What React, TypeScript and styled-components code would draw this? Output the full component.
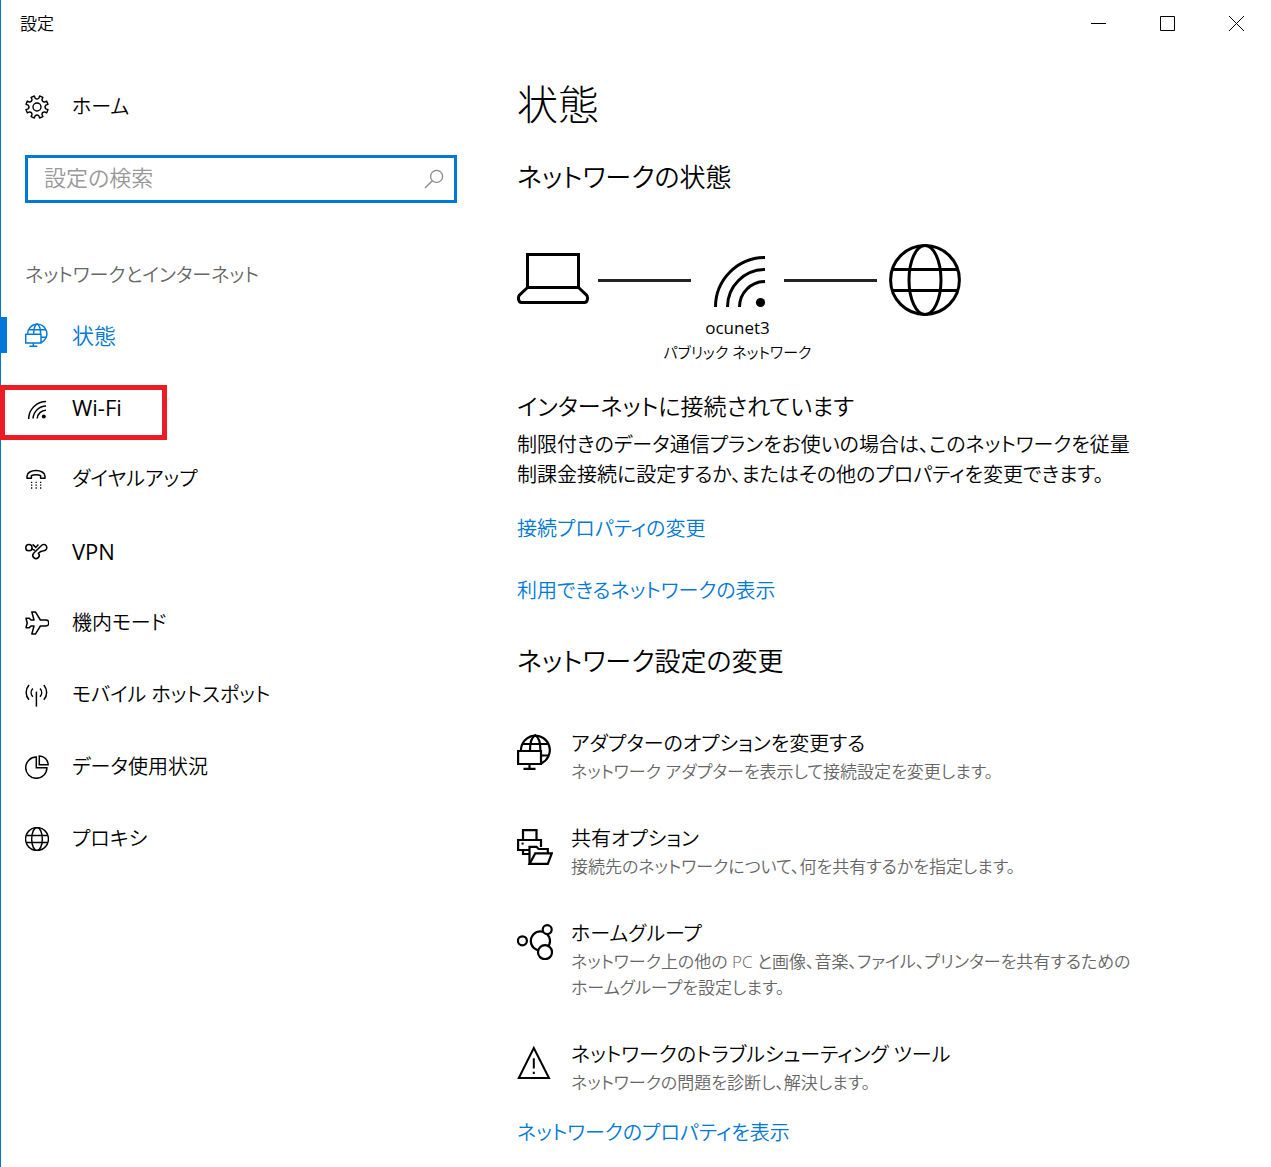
import React from "react";
import styled, { createGlobalStyle, css } from "styled-components";

const BLUE = "#0078d7";

const GlobalStyle = createGlobalStyle`
  *, *::before, *::after { box-sizing: border-box; }
  body {
    margin: 0;
    background: #fff;
    color: #000;
    font-family: "Open Sans", "Noto Sans CJK JP", sans-serif;
    font-feature-settings: "palt";
    font-weight: 350;
  }
  h1, h2, h3, p, ul { margin: 0; padding: 0; font-weight: inherit; }
  ul { list-style: none; }
  a { color: inherit; text-decoration: none; }
  button, input { font: inherit; font-feature-settings: inherit; color: inherit; }
  svg { display: block; flex: none; }
`;

const Window = styled.div`
  min-height: 100vh;
  border-left: 1px solid ${BLUE};
`;

const TitleBar = styled.header`
  display: flex;
  justify-content: space-between;
  height: 47px;
  padding-left: 19px;
  font-size: 17px;
  line-height: 47px;
`;

const WindowButtons = styled.div`
  display: flex;
`;

const WindowButton = styled.button`
  display: grid;
  place-items: center;
  width: 69px;
  border: 0;
  padding: 0;
  background: none;
`;

const Body = styled.div`
  display: grid;
  grid-template-columns: 456px minmax(0, 1fr);
  column-gap: 60px;
`;

const Sidebar = styled.nav`
  padding-top: 24px;
`;

const NavLink = styled.a<{ $active?: boolean; $latin?: boolean }>`
  position: relative;
  display: flex;
  align-items: center;
  gap: 23px;
  height: 72px;
  padding-left: 24px;
  font-size: ${(p) => (p.$active || p.$latin ? 22 : 20)}px;
  font-weight: ${(p) => (p.$latin ? 400 : "inherit")};
  line-height: 28px;
  color: ${(p) => (p.$active ? BLUE : "#000")};
  ${(p) =>
    p.$active &&
    css`
      &::before {
        content: "";
        position: absolute;
        left: 0;
        top: 18px;
        width: 6px;
        height: 36px;
        background: ${BLUE};
      }
    `}
`;

const Marker = styled.span`
  position: absolute;
  left: -1px;
  top: 14px;
  width: 167px;
  height: 55px;
  border: 5px solid #ed1c24;
`;

const SearchBox = styled.label`
  display: flex;
  align-items: center;
  height: 48px;
  margin: 12px 0 0 24px;
  padding: 0 10px 0 16px;
  border: 3px solid ${BLUE};
`;

const SearchInput = styled.input`
  flex: 1;
  min-width: 0;
  border: 0;
  padding: 0 0 4px;
  outline: 0;
  background: none;
  font-size: 22px;
  &::placeholder { color: #999; opacity: 1; }
`;

const SearchIconWrap = styled.span`
  color: #888;
`;

const Category = styled.h2`
  margin: 54px 0 6px;
  padding-left: 24px;
  font-size: 19px;
  line-height: 36px;
  color: #666;
`;

const Main = styled.main`
  padding: 29px 24px 16px 0;
`;

const PageTitle = styled.h1`
  font-size: 41px;
  font-weight: 300;
  line-height: 56px;
`;

const SectionTitle = styled.h2`
  font-size: 26px;
  line-height: 40px;
`;

const StatusSection = styled.section`
  padding-top: 25px;
`;

const Diagram = styled.div`
  display: grid;
  grid-template-columns: 81px 93px 93px 93px 84px;
  align-items: center;
  justify-items: center;
  width: max-content;
  margin-top: 47px;
  & > :first-child { justify-self: start; }
  & > :nth-child(5) { justify-self: end; }
`;

const Connector = styled.span`
  width: 100%;
  height: 3px;
  background: #222;
`;

const NetworkName = styled.p`
  grid-column: 2 / 5;
  font-size: 17px;
  font-weight: 400;
  line-height: 24px;
`;

const NetworkType = styled.p`
  grid-column: 2 / 5;
  font-size: 15px;
  line-height: 24px;
`;

const StatusTitle = styled.h3`
  margin-top: 23px;
  font-size: 23px;
  line-height: 38px;
`;

const Paragraph = styled.p`
  margin-top: 5px;
  font-size: 20px;
  line-height: 30px;
`;

const Link = styled.a`
  display: block;
  width: max-content;
  font-size: 20px;
  line-height: 32px;
  color: ${BLUE};
`;

const LinkList = styled.div`
  display: grid;
  gap: 30px;
  margin-top: 23px;
`;

const ChangeSection = styled.section`
  padding-top: 34px;
`;

const OptionList = styled.ul`
  display: grid;
  gap: 38px;
  margin: 47px 0 21px;
`;

const Option = styled.a`
  display: grid;
  grid-template-columns: 36px minmax(0, 1fr);
  column-gap: 18px;
  & > svg { margin-top: 6px; }
`;

const OptionTitle = styled.h3`
  font-size: 20px;
  line-height: 31px;
`;

const OptionText = styled.p`
  font-size: 17px;
  line-height: 26px;
  color: #666;
`;

type IconProps = { size: number; box?: number; stroke?: number; children: React.ReactNode };

const Icon = ({ size, box = size, stroke = 1.5, children }: IconProps) => (
  <svg
    width={size}
    height={size}
    viewBox={`0 0 ${box} ${box}`}
    fill="none"
    stroke="currentColor"
    strokeWidth={stroke}
    aria-hidden="true"
  >
    {children}
  </svg>
);

const gearPath = (() => {
  const at = (r: number, deg: number) => {
    const a = (deg * Math.PI) / 180;
    return `${(12 + r * Math.cos(a)).toFixed(2)} ${(12 + r * Math.sin(a)).toFixed(2)}`;
  };
  let d = "";
  for (let i = 0; i < 8; i++) {
    const c = 22.5 + i * 45;
    d += `${i ? "L" : "M"}${at(9, c - 11)}L${at(11.3, c - 9)}L${at(11.3, c + 9)}L${at(9, c + 11)}`;
    d += `A2.6 2.6 0 0 0 ${at(9, c + 34)}`;
  }
  return d + "Z";
})();

const GearIcon = () => (
  <Icon size={24} stroke={1.4}>
    <path d={gearPath} strokeLinejoin="round" />
    <circle cx="12" cy="12" r="4" />
  </Icon>
);

const GlobeIcon = ({ size, stroke }: { size: number; stroke: number }) => (
  <Icon size={size} box={72} stroke={stroke}>
    <circle cx="36" cy="36" r="34.4" />
    <ellipse cx="36" cy="36" rx="16" ry="34.4" />
    <path d="M4 25.5H68M4 46.5H68" />
  </Icon>
);

const NetworkIcon = ({ size }: { size: number }) => (
  <Icon size={size} box={36} stroke={2.2}>
    <path d="M4 16A14.4 14.4 0 1 1 24.4 29.2" />
    <path d="M5.5 10H31.5M24 21.5H32" />
    <path d="M13 16C13 9 15 3 18.2 1.2C21.6 3 23.4 9 23.4 16" />
    <path d="M18.2 1.2V17" strokeWidth="0" />
    <path d="M1.1 17H24V30H1.1ZM12.5 30V35M6.5 34.9H18.5" />
  </Icon>
);

const WifiSmallIcon = () => (
  <Icon size={24} stroke={1.5}>
    <path d="M3.7 24V22.5A17.5 17.5 0 0 1 21 6.6" />
    <path d="M8 23.5A13.4 13.4 0 0 1 21 11" />
    <path d="M12.2 23.5A9 9 0 0 1 21 15.2" />
    <circle cx="18.8" cy="21.6" r="2" fill="currentColor" stroke="none" />
  </Icon>
);

const DialIcon = () => (
  <Icon size={24} stroke={1.5}>
    <path
      strokeLinejoin="round"
      d="M2 11.2V9C2 5.6 6.4 3.6 11 3.6S20 5.6 20 9V11.2H15.6V8.6C13.6 7.6 8.4 7.6 6.4 8.6V11.2Z"
    />
    <path d="M6 15.4H17M6 18.2H17M6 21H17" strokeWidth="1.3" strokeDasharray="1.3 3.2" />
  </Icon>
);

const VpnIcon = () => (
  <Icon size={24} stroke={1.5}>
    <circle cx="3.9" cy="8.7" r="3.1" />
    <path d="M6.8 9C7.6 10.8 8.6 11.4 10 11" />
    <path d="M8.6 14.2L16.2 6.8A3.1 3.1 0 1 1 18.8 11.7C16.4 11.9 15 12.4 13.4 14.2A3.2 3.2 0 1 1 8.6 14.2" />
    <path d="M7.6 5.4L10.8 8.4L13.4 5.6" />
  </Icon>
);

const PlaneIcon = () => (
  <Icon size={24} stroke={1.5}>
    <path
      strokeLinejoin="round"
      d="M6.8 .9H10.4L15.4 9H20.8A3 3 0 0 1 20.8 15H15.4L10.4 23.1H6.8L9 15H6L4.2 16.8H1L2.2 12L1 7.2H4.2L6 9H9Z"
    />
  </Icon>
);

const HotspotIcon = () => (
  <Icon size={24} stroke={1.5}>
    <path d="M11.4 8.6V23.6" />
    <path d="M7.8 5.6C5.6 8 5.6 11.4 7.8 13.8M15 5.6C17.2 8 17.2 11.4 15 13.8" />
    <path d="M4 2C.2 6.4 .2 12.4 4 16.8M18.8 2C22.6 6.4 22.6 12.4 18.8 16.8" />
  </Icon>
);

const DataIcon = () => (
  <Icon size={24} stroke={1.5}>
    <path d="M11.3 2.1V12.7H21.9A10.6 10.6 0 1 1 11.3 2.1Z" />
    <path d="M14.3 .9V9.7H23.1A8.8 8.8 0 0 0 14.3 .9Z" />
  </Icon>
);

const SearchIcon = () => (
  <Icon size={20} stroke={1.3}>
    <circle cx="12.6" cy="7.4" r="6" />
    <path d="M8.3 11.7L1 19" />
  </Icon>
);

const LaptopIcon = () => (
  <Icon size={72} stroke={3}>
    <path d="M10.5 43V10.5H61.5V43" />
    <path d="M10.5 43.5H61.5L69.6 51.2C71 53 71 58.5 67.5 58.5H4.5C1 58.5 1 53 2.4 51.2Z" strokeLinejoin="round" />
  </Icon>
);

const WifiLargeIcon = () => (
  <Icon size={72} stroke={3}>
    <path d="M13.5 63A49.5 49.5 0 0 1 63 13.5M25.5 63A37.5 37.5 0 0 1 63 25.5M37.5 63A25.5 25.5 0 0 1 63 37.5" />
    <circle cx="58.5" cy="58.5" r="4.6" fill="currentColor" stroke="none" />
  </Icon>
);

const ShareIcon = () => (
  <Icon size={36} stroke={2.2}>
    <path d="M6 10.5V1.1H19.5V10.5" />
    <path d="M12 21H1.1V11H24V18" />
    <path d="M6 21V25H12" />
    <rect x="4.6" y="13.6" width="2" height="2" fill="currentColor" stroke="none" />
    <path d="M12.5 35V17.8H19.5L21.5 20H30.8V24" />
    <path d="M12.5 34.9L18.2 24.4H34.8L30.8 34.9Z" />
  </Icon>
);

const HomeGroupIcon = () => (
  <Icon size={36} stroke={2.2}>
    <circle cx="5.4" cy="16.8" r="4.5" />
    <circle cx="23.4" cy="17" r="9.6" />
    <circle cx="30.2" cy="5.6" r="4.5" fill="#fff" />
    <circle cx="28" cy="28.2" r="7" fill="#fff" />
  </Icon>
);

const WarningIcon = () => (
  <Icon size={36} stroke={2}>
    <path d="M16.8 3L32 33H1.8Z" />
    <path d="M16.8 13.2V23.6M16.8 26.8V29" />
  </Icon>
);

const navItems = [
  { label: "状態", icon: <NetworkIcon size={24} />, active: true },
  { label: "Wi-Fi", icon: <WifiSmallIcon />, marked: true, latin: true },
  { label: "ダイヤルアップ", icon: <DialIcon /> },
  { label: "VPN", icon: <VpnIcon />, latin: true },
  { label: "機内モード", icon: <PlaneIcon /> },
  { label: "モバイル ホットスポット", icon: <HotspotIcon /> },
  { label: "データ使用状況", icon: <DataIcon /> },
  { label: "プロキシ", icon: <GlobeIcon size={24} stroke={4.4} /> },
];

const options = [
  {
    title: "アダプターのオプションを変更する",
    text: "ネットワーク アダプターを表示して接続設定を変更します。",
    icon: <NetworkIcon size={36} />,
  },
  {
    title: "共有オプション",
    text: "接続先のネットワークについて、何を共有するかを指定します。",
    icon: <ShareIcon />,
  },
  {
    title: "ホームグループ",
    text: (
      <>
        ネットワーク上の他の PC と画像、音楽、ファイル、プリンターを共有するための
        <br />
        ホームグループを設定します。
      </>
    ),
    icon: <HomeGroupIcon />,
  },
  {
    title: "ネットワークのトラブルシューティング ツール",
    text: "ネットワークの問題を診断し、解決します。",
    icon: <WarningIcon />,
  },
];

export default function App() {
  return (
    <Window lang="ja">
      <GlobalStyle />
      <TitleBar>
        <span>設定</span>
        <WindowButtons>
          <WindowButton aria-label="最小化">
            <Icon size={15} stroke={1}><path d="M0 7.5H15" /></Icon>
          </WindowButton>
          <WindowButton aria-label="最大化">
            <Icon size={15} stroke={1}><path d="M.5 .5H14.5V14.5H.5Z" /></Icon>
          </WindowButton>
          <WindowButton aria-label="閉じる">
            <Icon size={15} stroke={1}><path d="M0 0L15 15M15 0L0 15" /></Icon>
          </WindowButton>
        </WindowButtons>
      </TitleBar>
      <Body>
        <Sidebar>
          <NavLink href="#home">
            <GearIcon />
            ホーム
          </NavLink>
          <SearchBox>
            <SearchInput type="text" placeholder="設定の検索" aria-label="設定の検索" />
            <SearchIconWrap><SearchIcon /></SearchIconWrap>
          </SearchBox>
          <Category>ネットワークとインターネット</Category>
          <ul>
            {navItems.map((item) => (
              <li key={item.label}>
                <NavLink href="#" $active={item.active} $latin={item.latin}>
                  {item.icon}
                  {item.label}
                  {item.marked && <Marker />}
                </NavLink>
              </li>
            ))}
          </ul>
        </Sidebar>
        <Main>
          <PageTitle>状態</PageTitle>
          <StatusSection>
            <SectionTitle>ネットワークの状態</SectionTitle>
            <Diagram>
              <LaptopIcon />
              <Connector />
              <WifiLargeIcon />
              <Connector />
              <GlobeIcon size={72} stroke={3} />
              <NetworkName>ocunet3</NetworkName>
              <NetworkType>パブリック ネットワーク</NetworkType>
            </Diagram>
            <StatusTitle>インターネットに接続されています</StatusTitle>
            <Paragraph>
              制限付きのデータ通信プランをお使いの場合は、このネットワークを従量
              <br />
              制課金接続に設定するか、またはその他のプロパティを変更できます。
            </Paragraph>
            <LinkList>
              <Link href="#properties">接続プロパティの変更</Link>
              <Link href="#networks">利用できるネットワークの表示</Link>
            </LinkList>
          </StatusSection>
          <ChangeSection>
            <SectionTitle>ネットワーク設定の変更</SectionTitle>
            <OptionList>
              {options.map((option) => (
                <li key={option.title}>
                  <Option href="#">
                    {option.icon}
                    <div>
                      <OptionTitle>{option.title}</OptionTitle>
                      <OptionText>{option.text}</OptionText>
                    </div>
                  </Option>
                </li>
              ))}
            </OptionList>
            <Link href="#network-properties">ネットワークのプロパティを表示</Link>
          </ChangeSection>
        </Main>
      </Body>
    </Window>
  );
}
